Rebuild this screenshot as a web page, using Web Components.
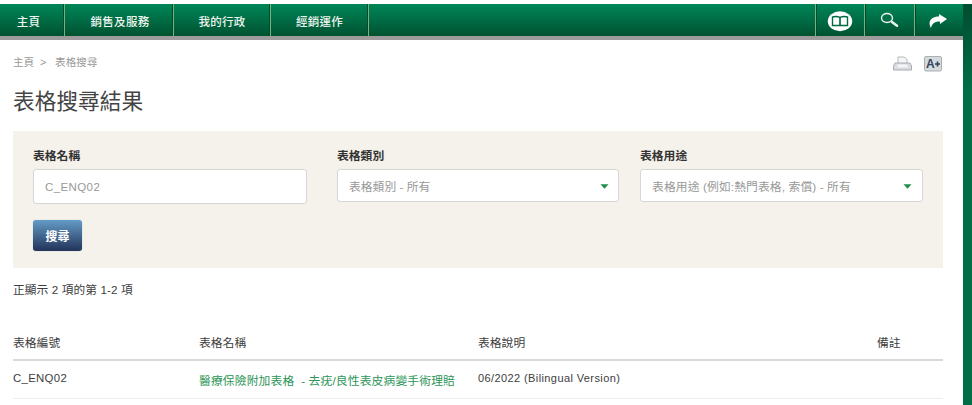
<!DOCTYPE html>
<html lang="zh-Hant">
<head>
<meta charset="utf-8">
<title>表格搜尋結果</title>
<style>
html,body{margin:0;height:405px;overflow:hidden;background:#fff;font-family:"Liberation Sans","Noto Sans CJK TC",sans-serif;font-size:12px;color:#3d3d3d}
</style>
</head>
<body>
<form-page></form-page>
<script>
const define = (name, html) => customElements.define(name, class extends HTMLElement {
  connectedCallback() {
    if (this.shadowRoot) return;
    const t = document.createElement('template');
    t.innerHTML = html;
    this.attachShadow({mode: 'open'}).append(t.content.cloneNode(true));
    this.ready(this.shadowRoot);
  }
  ready(root) {
    const label = root.querySelector('[data-label]');
    if (label) label.textContent = this.getAttribute('label');
  }
});

define('nav-item', `<style>
:host{display:flex;align-items:center;justify-content:center;box-sizing:border-box;height:32px;padding-top:1px;border-right:1px solid #79b07c;box-shadow:inset -1px 0 #014a2c;color:#eef5ee;font-size:11.5px;font-weight:500;letter-spacing:.3px;white-space:nowrap}
:host([tool]){padding-top:2px;border-right:0;border-left:1px solid #79b07c;box-shadow:inset 1px 0 #014a2c}
</style><slot></slot>`);

define('nav-bar', `<style>
:host{display:flex;height:32px;background:linear-gradient(#008558,#006f47 45%,#005230) padding-box;border-bottom:4px solid #9c9c9c;box-sizing:content-box}
.gap{flex:1}
</style><slot></slot><span class="gap"></span><slot name="tools"></slot>`);

define('search-field', `<style>
:host{display:block}
label{display:block;height:17px;line-height:19px;font-weight:700;font-size:11.8px;color:#333;margin-bottom:5px}
.box{display:flex;align-items:center;justify-content:space-between;box-sizing:border-box;height:33px;padding:0 9px 0 11px;background:#fff;border:1px solid #d6d6d6;border-radius:3px;color:#999;font-size:11.8px;white-space:nowrap}
:host([text]) .box{height:35px;letter-spacing:.4px;font-size:11.5px}
:host([wide]) .box{letter-spacing:.1px;padding-right:10px}
svg{display:block;margin-top:2px}
:host([text]) svg{display:none}
</style><label data-label></label><div class="box"><span><slot></slot></span><svg width="9" height="5"><path d="M.5 .3h8L4.5 4.8z" fill="#218f4c"/></svg></div>`);

define('action-button', `<style>
:host{display:flex;align-items:center;justify-content:center;box-sizing:border-box;width:49px;height:31px;border-radius:3px;border-bottom:1px solid #28385c;background:linear-gradient(#639cc6,#24365c);color:#fff;font-size:12px;font-weight:700;box-shadow:0 0 1px #8aa}
</style><slot></slot>`);

define('search-panel', `<style>
:host{display:block;box-sizing:border-box;height:137px;padding:16px 20px 0 20px;background:#f5f2eb}
.fields{display:flex;height:73px}
</style><div class="fields"><slot></slot></div><slot name="action"></slot>`);

define('table-row', `<style>
:host{display:grid;grid-template-columns:186px 279px 399px 1fr;box-sizing:border-box;height:38px;padding-bottom:3px;align-items:center;border-bottom:1px solid #eee;white-space:nowrap;font-size:11.8px}
:host([head]){height:35px;border-bottom:2px solid #d9d9d9}
</style><slot></slot>`);

define('form-page', `<style>
:host{display:grid;grid-template-columns:963px 9px;height:401px;padding-top:4px}
.strip{background:linear-gradient(#004d30,#006f47 90px)}
main{padding:0 20px 0 13px}
.top{display:flex;justify-content:space-between;height:44px;box-sizing:border-box;padding-top:13px}
.crumb{font-size:10.6px;line-height:18px;color:#999;white-space:pre}
.tools{display:flex;gap:12px;padding-top:3px}
h1{margin:0;height:47px;line-height:35px;font-size:21.7px;font-weight:400;color:#444}
.name{width:274px;margin-right:30px}
.type{width:282px;margin-right:21px}
.use{width:283px}
.count{margin:13px 0 0;height:17px;line-height:17px;font-size:11.7px;word-spacing:.4px}
.list{margin-top:28px}
.latin{font-size:11.4px;letter-spacing:.3px}
.ver{font-size:11px;letter-spacing:.4px}
.link{color:#2d9558;white-space:pre;padding-top:3px;letter-spacing:.12px}
svg{display:block}
</style>
<div>
<nav-bar>
<nav-item style="width:65px;padding-right:7px">主頁</nav-item><nav-item style="width:109px;padding-left:2px">銷售及服務</nav-item><nav-item style="width:97px">我的行政</nav-item><nav-item style="width:98px">經銷運作</nav-item>
<nav-item tool slot="tools" style="width:49px"><svg width="26" height="22" viewBox="0 0 26 22"><ellipse cx="13" cy="11.300" rx="12.200" ry="10" fill="#fff"/><path d="M5.500 7q4-1 7.500.3 3.500-1.300 7.500-.3v8.500H5.500z" fill="none" stroke="#006b43" stroke-width="1.400"/><path d="M13 7.300v8.500" stroke="#006b43" stroke-width="1.700"/></svg></nav-item>
<nav-item tool slot="tools" style="width:50px"><svg width="20" height="18" viewBox="0 0 20 18"><ellipse cx="7" cy="6" rx="5.500" ry="4.500" fill="none" stroke="#e8f2ec" stroke-width="1.400"/><path d="m12 10 5 3.700" stroke="#e8f2ec" stroke-width="2.600" stroke-linecap="round"/></svg></nav-item>
<nav-item tool slot="tools" style="width:49px;padding-right:2px"><svg width="20" height="16" viewBox="0 0 20 16"><path d="M11 1l8 5-7 5V8.500C7 8.500 4 10 3 15-1 8 4 3.500 11 3.500z" fill="#fff"/></svg></nav-item>
</nav-bar>
<main>
<div class="top"><span class="crumb">主頁  &gt;   表格搜尋</span><div class="tools">
<svg width="19" height="16" viewBox="0 0 19 16"><path d="M5 8V1h6l3 2.500V8" fill="#f5f6f7" stroke="#b4b8bd"/><path d="M2 7h15l1.500 3v4h-18v-4z" fill="#d9dce0" stroke="#a8acb3"/><path d="M5 8.500h9l1 3H4z" fill="#f4f5f7"/></svg>
<svg width="19" height="16" viewBox="0 0 19 16"><rect x=".5" y=".5" width="17" height="14.500" rx="1.500" fill="#d5dadd" stroke="#aaafb3"/><text x="2" y="12" font-size="12" font-weight="700" fill="#35475b" textLength="9">A</text><path d="M11 8h5M13.500 5.500v5" stroke="#35475b" stroke-width="1.700"/></svg>
</div></div>
<h1>表格搜尋結果</h1>
<search-panel>
<search-field class="name" text label="表格名稱">C_ENQ02</search-field><search-field class="type" label="表格類別">表格類別 - 所有</search-field><search-field class="use" wide label="表格用途">表格用途 (例如:熱門表格, 索償) - 所有</search-field>
<action-button slot="action">搜尋</action-button>
</search-panel>
<p class="count">正顯示 2 項的第 1-2 項</p>
<div class="list"><table-row head><span>表格編號</span><span>表格名稱</span><span>表格說明</span><span>備註</span></table-row>
<table-row><span class="latin">C_ENQ02</span><span class="link">醫療保險附加表格  - 去疣/良性表皮病變手術理賠</span><span class="ver">06/2022 (Bilingual Version)</span><span></span></table-row></div>
</main>
</div>
<div class="strip"></div>`);
</script>
</body>
</html>
